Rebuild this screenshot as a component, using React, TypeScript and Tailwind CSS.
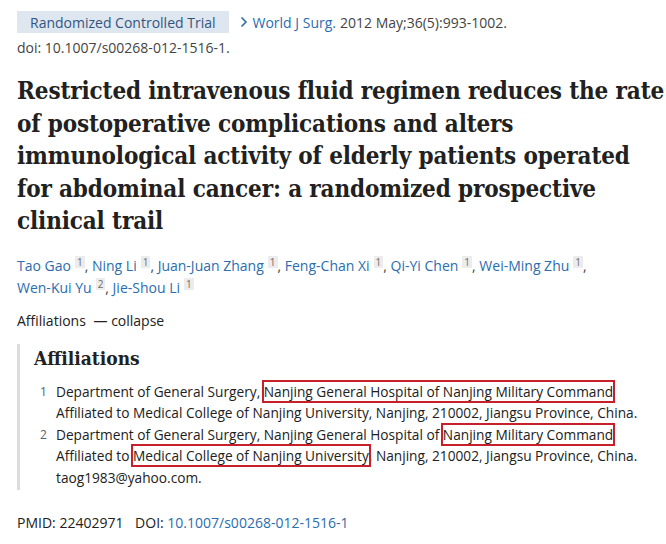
export default function App() {
  const sans = { fontFamily: '"Open Sans", "Noto Sans", sans-serif' };
  const serif = { fontFamily: '"DejaVu Serif Condensed", "DejaVu Serif", serif' };
  const authors: [string, string][] = [
    ["Tao Gao", "1"],
    ["Ning Li", "1"],
    ["Juan-Juan Zhang", "1"],
    ["Feng-Chan Xi", "1"],
    ["Qi-Yi Chen", "1"],
    ["Wei-Ming Zhu", "1"],
    ["Wen-Kui Yu", "2"],
    ["Jie-Shou Li", "1"],
  ];
  const Sup = ({ n }: { n: string }) => (
    <span className="relative top-[-5px] ml-[4px] inline-block bg-[#ececec] px-[2px] text-[10px] leading-[12px] text-[#6b6b6b]">{n}</span>
  );
  const Box = ({ children }: { children: React.ReactNode }) => (
    <span className="outline outline-2 outline-[#c8202a]">{children}</span>
  );
  return (
    <div className="w-[666px] h-[544px] bg-white overflow-hidden pl-[17px] pt-[11px] text-[#212121]" style={sans}>
      <div className="flex items-center text-[14px] h-[22px]">
        <span className="bg-[#dee6f0] text-[#325580] h-[22px] px-[13px] flex items-center">Randomized Controlled Trial</span>
        <span className="ml-[11px] text-[#2a6db0] flex items-center">
          <svg width="8" height="12" viewBox="0 0 8 12" className="mr-[5px]"><path d="M1.5 1.5 L6 6 L1.5 10.5" fill="none" stroke="#2a6db0" strokeWidth="1.6" /></svg>
          World J Surg.
        </span>
        <span className="ml-[4px] text-[#444]">2012 May;36(5):993-1002.</span>
      </div>
      <div className="text-[14px] text-[#444] mt-[4px]">doi: 10.1007/s00268-012-1516-1.</div>
      <h1 className="mt-[17px] text-[24px] leading-[32.5px] font-bold font-stretch-condensed tracking-[-0.14px] text-[#212121] w-[649px]" style={serif}>
        Restricted intravenous fluid regimen reduces the rate of postoperative complications and alters immunological activity of elderly patients operated for abdominal cancer: a randomized prospective clinical trail
      </h1>
      <div className="mt-[17px] text-[14px] leading-[22px] w-[620px] text-[#2a6db0]">
        {authors.map(([a, n], i) => (
          <span key={i}>
            <span className="whitespace-nowrap">
              {a}
              <Sup n={n} />
              {i < authors.length - 1 ? <span className="text-[#444]">,</span> : null}
            </span>
            {i < authors.length - 1 ? " " : null}
          </span>
        ))}
      </div>
      <div className="mt-[11px] text-[14px] text-[#212121]">Affiliations <span className="ml-[4px]">— collapse</span></div>
      <div className="mt-[13px] border-l-[3px] border-[#dcdcdc] pl-[14px] pb-[2px] w-[640px]">
        <div className="text-[19px] font-bold font-stretch-condensed leading-[28px]" style={serif}>Affiliations</div>
        <ol className="mt-[9px] text-[13.7px] leading-[21.5px]">
          <li className="flex">
            <span className="w-[22px] pl-[6px] text-[12px] text-[#5b616b] shrink-0">1</span>
            <span>
              Department of General Surgery, <Box>Nanjing General Hospital of Nanjing Military Command</Box> Affiliated to Medical College of Nanjing University, Nanjing, 210002, Jiangsu Province, China.
            </span>
          </li>
          <li className="flex">
            <span className="w-[22px] pl-[6px] text-[12px] text-[#5b616b] shrink-0">2</span>
            <span>
              Department of General Surgery, Nanjing General Hospital of <Box>Nanjing Military Command</Box> Affiliated to <Box>Medical College of Nanjing University</Box>, Nanjing, 210002, Jiangsu Province, China. taog1983@yahoo.com.
            </span>
          </li>
        </ol>
      </div>
      <div className="mt-[22px] text-[14px]">
        PMID: 22402971 <span className="ml-[8px]">DOI: </span><span className="text-[#2a6db0]">10.1007/s00268-012-1516-1</span>
      </div>
    </div>
  );
}
